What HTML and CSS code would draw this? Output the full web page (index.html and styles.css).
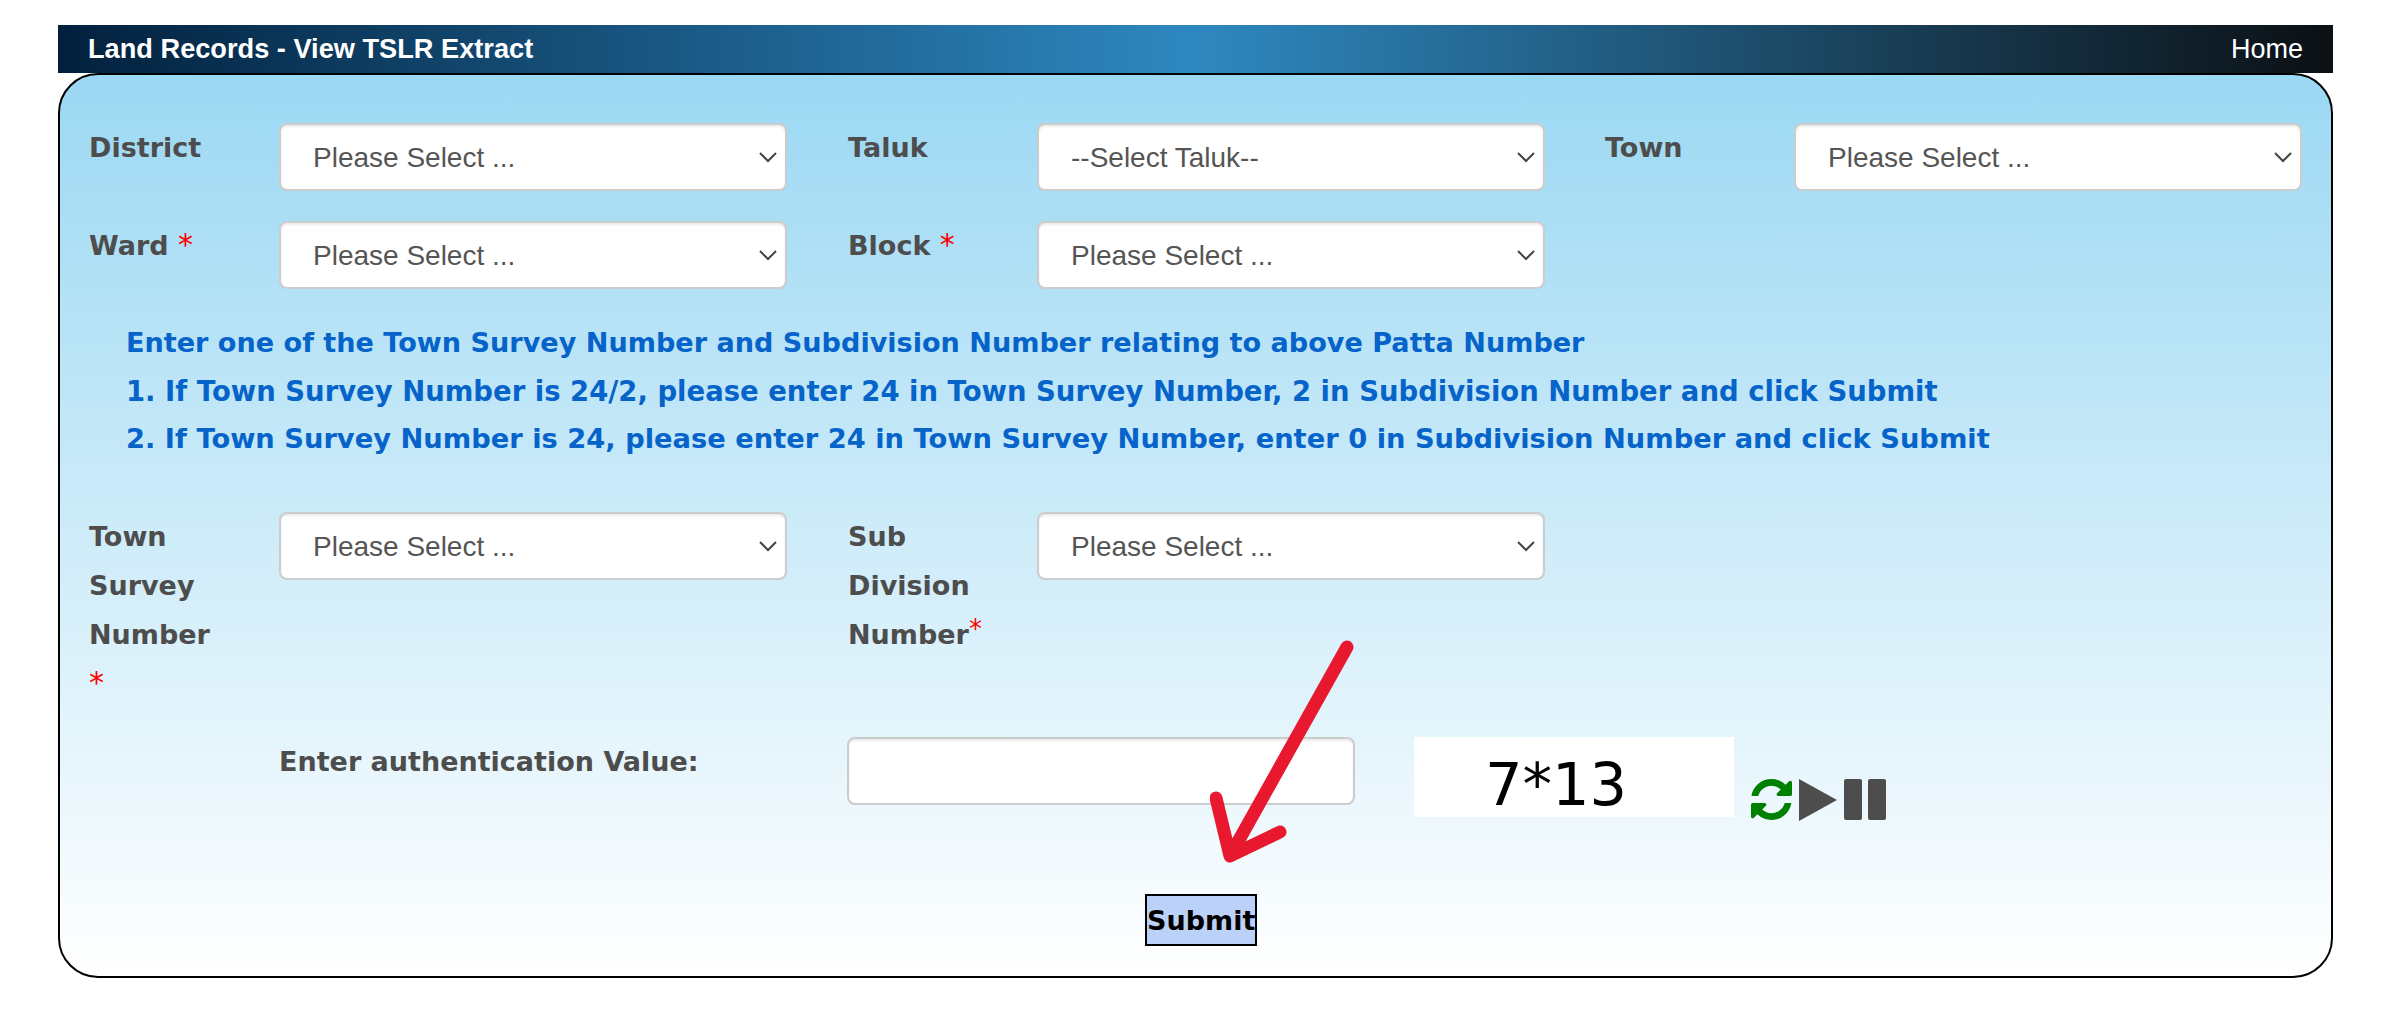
FILE: index.html
```html
<!DOCTYPE html>
<html lang="en">
<head>
    <meta charset="UTF-8">
    <meta name="viewport" content="width=device-width, initial-scale=1.0">
    <title>Land Records - View TSLR Extract</title>
    <link rel="stylesheet" href="styles.css">
</head>
<body>
    <div class="header">
        <span class="header-title">Land Records - View TSLR Extract</span>
        <a class="header-link">Home</a>
    </div>

    <form class="panel">
        <div class="form-row">
            <label class="field-label">District</label>
            <select class="field"><option>Please Select ...</option></select>
            <label class="field-label">Taluk</label>
            <select class="field"><option>--Select Taluk--</option></select>
            <label class="field-label">Town</label>
            <select class="field"><option>Please Select ...</option></select>
        </div>

        <div class="form-row">
            <label class="field-label">Ward <span class="req">*</span></label>
            <select class="field"><option>Please Select ...</option></select>
            <label class="field-label">Block <span class="req">*</span></label>
            <select class="field"><option>Please Select ...</option></select>
        </div>

        <div class="help">
            <p>Enter one of the Town Survey Number and Subdivision Number relating to above Patta Number</p>
            <p>1. If Town Survey Number is 24/2, please enter 24 in Town Survey Number, 2 in Subdivision Number and click Submit</p>
            <p>2. If Town Survey Number is 24, please enter 24 in Town Survey Number, enter 0 in Subdivision Number and click Submit</p>
        </div>

        <div class="form-row">
            <label class="field-label">Town Survey Number <span class="req">*</span></label>
            <select class="field"><option>Please Select ...</option></select>
            <label class="field-label">Sub Division Number<sup class="req">*</sup></label>
            <select class="field"><option>Please Select ...</option></select>
        </div>

        <div class="captcha-row">
            <label class="field-label captcha-label">Enter authentication Value:</label>
            <input class="field captcha-input" type="text">
            <div class="captcha-img">7*13</div>
            <div class="captcha-tools">
                <svg class="icon-refresh" viewBox="128 128 1536 1536"><path fill="#008000" d="M1639 1056q0 5-1 7-64 268-268 434.5t-478 166.5q-146 0-282.5-55t-243.5-157l-129 129q-19 19-45 19t-45-19-19-45v-448q0-26 19-45t45-19h448q26 0 45 19t19 45-19 45l-137 137q71 66 161 102t187 36q134 0 250-65t186-179q11-17 53-117 8-23 30-23h192q13 0 22.5 9.5t9.5 22.5zm25-800v448q0 26-19 45t-45 19h-448q-26 0-45-19t-19-45 19-45l138-138q-148-137-349-137-134 0-250 65t-186 179q-11 17-53 117-8 23-30 23h-199q-13 0-22.5-9.5t-9.5-22.5v-7q65-268 270-434.5t480-166.5q146 0 284 55.5t245 156.5l130-129q19-19 45-19t45 19 19 45z"/></svg>
                <svg class="icon-play" viewBox="0 0 38 42"><path fill="#4d4d4d" d="M0 0L38 21L0 42z"/></svg>
                <div class="icon-pause"><span></span><span></span></div>
            </div>
        </div>

        <div class="submit-row">
            <button class="submit-btn" type="button">Submit</button>
        </div>

        <!-- red arrow drawn over the form -->
        <svg class="arrow" viewBox="0 0 150 230">
            <path d="M137 7L20 216M6 158L20 216L70 192" fill="none" stroke="#e8192f" stroke-width="13" stroke-linecap="round" stroke-linejoin="round"/>
        </svg>
    </form>
</body>
</html>
```

FILE: styles.css
```css
body {
    margin: 0;
    padding: 25px 72px 32px 58px;
    background: #fff;
    font-family: "DejaVu Sans", Verdana, sans-serif;
}
.header {
    display: flex;
    justify-content: space-between;
    align-items: center;
    height: 48px;
    padding: 0 30px;
    color: #fff;
    font-family: "Liberation Sans", Arial, sans-serif;
    font-size: 27px;
    background: linear-gradient(to right, #02203d 0%, #2e88c0 50%, #0b1014 100%);
}
.header-title {
    font-size: 27.2px;
    font-weight: bold;
}
.panel {
    position: relative;
    height: 905px;
    box-sizing: border-box;
    padding: 48px 0 0 29px;
    border: 2px solid #000;
    border-radius: 40px;
    background: linear-gradient(to bottom, #9bd8f3 0%, #fff 100%);
}
.form-row {
    display: grid;
    grid-template-columns: 190px 569px 189px 568px 189px 508px;
    margin-bottom: 30px;
    align-items: start;
}
.field-label {
    width: 140px;
    color: #4d4d4d;
    font-size: 27px;
    font-weight: bold;
    line-height: 49px;
}
.req {
    color: #f00;
    font-size: 30px;
    font-weight: normal;
    line-height: 1;
}
sup.req {
    font-size: 26px;
    line-height: 0;
    vertical-align: 6px;
}
.field {
    box-sizing: border-box;
    width: 508px;
    height: 68px;
    padding: 0 32px;
    border: 2px solid #ccc;
    border-radius: 8px;
    background-color: #fff;
    color: #555;
    font-family: "Liberation Sans", Arial, sans-serif;
    font-size: 28px;
    box-shadow: inset 0 2px 2px rgba(0,0,0,0.08);
}
select.field {
    appearance: none;
    background-image: url("data:image/svg+xml,%3Csvg xmlns='http://www.w3.org/2000/svg' width='18' height='11'%3E%3Cpath d='M1 1l8 8 8-8' fill='none' stroke='%23444' stroke-width='2'/%3E%3C/svg%3E");
    background-repeat: no-repeat;
    background-position: right 8px center;
}
.help {
    margin: 2px 0 0 37px;
    padding-bottom: 49px;
    color: #0563c9;
    font-size: 27.3px;
    font-weight: bold;
    line-height: 48px;
}
.help p {
    margin: 0;
}
.help p:nth-child(1) {
    font-size: 27.08px;
}
.help p:nth-child(2) {
    font-size: 27.48px;
}
.captcha-row {
    display: flex;
    align-items: flex-start;
    margin-top: -1px;
    padding-left: 190px;
}
.captcha-label {
    width: 568px;
}
.captcha-input {
    margin-right: 59px;
}
.captcha-img {
    width: 320px;
    height: 80px;
    background: #fff;
    color: #000;
    font-size: 59px;
    line-height: 96px;
    padding-left: 71px;
    box-sizing: border-box;
}
.captcha-tools {
    display: flex;
    gap: 7px;
    margin: 42px 0 0 17px;
}
.icon-refresh {
    width: 41px;
    height: 41px;
}
.icon-play {
    width: 38px;
    height: 42px;
}
.icon-pause {
    display: flex;
    gap: 6px;
}
.icon-pause span {
    width: 18px;
    height: 41px;
    border-radius: 2px;
    background: #4d4d4d;
}
.submit-row {
    display: flex;
    padding-left: 1056px;
    margin-top: 73px;
}
.submit-btn {
    box-sizing: border-box;
    width: 112px;
    height: 52px;
    padding: 0;
    border: 2px solid #000;
    background: #bcd1f8;
    color: #000;
    font-family: "DejaVu Sans", Verdana, sans-serif;
    font-size: 27px;
    font-weight: bold;
}
.arrow {
    position: absolute;
    left: 1150px;
    top: 565px;
    width: 150px;
    height: 230px;
}
```
